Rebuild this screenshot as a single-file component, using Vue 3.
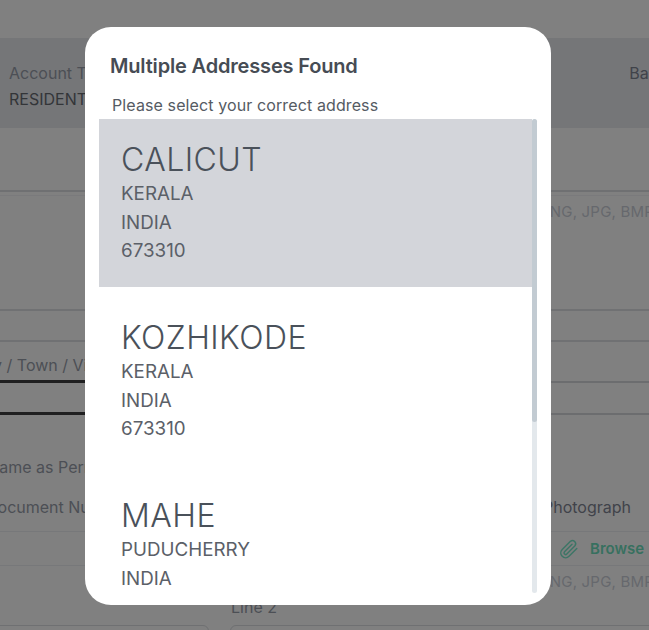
<template>
  <div class="page">
    <div class="bg">
      <div class="band">
        <div>
          <div class="label">Account Type</div>
          <div class="value">RESIDENTIAL</div>
        </div>
        <div class="label dark">Bank</div>
      </div>
      <div class="row r1"></div>
      <div class="row r2"><span class="hint">PNG, JPG, BMP</span></div>
      <div class="row r3"></div>
      <div class="row r4">
        <div class="cell focus"><span class="label city">City / Town / Village</span></div>
        <div class="cell"></div>
      </div>
      <div class="row r5">
        <div class="cell focus"></div>
        <div class="cell"></div>
      </div>
      <div class="row r6">
        <span class="label same">Same as Permanent</span>
      </div>
      <div class="row r7">
        <span class="label doc">Document Number</span>
        <span class="label dark photo">Photograph</span>
      </div>
      <div class="row r8">
        <svg class="clip" viewBox="0 0 24 24" width="22" height="22" fill="none" stroke="#3d7566" stroke-width="1.6" stroke-linecap="round" stroke-linejoin="round">
          <path d="M20.5 11.5 12 20a5.2 5.2 0 0 1-7.4-7.4l9-9a3.5 3.5 0 0 1 4.9 4.9l-8.9 9a1.7 1.7 0 0 1-2.5-2.5l8.2-8.2" />
        </svg>
        <span class="browse">Browse</span>
      </div>
      <div class="row r9"><span class="hint">PNG, JPG, BMP</span></div>
      <div class="row r10">
        <span class="label line2">Line 2</span>
      </div>
      <div class="inputs">
        <div class="input left"></div>
        <div class="input right"></div>
      </div>
    </div>

    <div class="overlay">
      <div class="modal">
        <h2 class="title">Multiple Addresses Found</h2>
        <p class="sub">Please select your correct address</p>
        <div class="list-wrap">
          <div class="list">
            <div
              v-for="(a, i) in addresses"
              :key="a.city"
              class="item"
              :class="{ selected: i === 0 }"
            >
              <div class="city-name">{{ a.city }}</div>
              <div class="line">{{ a.state }}</div>
              <div class="line">INDIA</div>
              <div class="line">{{ a.pin }}</div>
            </div>
          </div>
          <div class="track"><div class="thumb"></div></div>
        </div>
      </div>
    </div>
  </div>
</template>

<script setup>
const addresses = [
  { city: 'CALICUT', state: 'KERALA', pin: '673310' },
  { city: 'KOZHIKODE', state: 'KERALA', pin: '673310' },
  { city: 'MAHE', state: 'PUDUCHERRY', pin: '673310' }
]
</script>

<style>
html, body {
  margin: 0;
  background: #808080;
}
</style>

<style scoped>
.page {
  position: relative;
  width: 649px;
  height: 630px;
  overflow: hidden;
  background: #808080;
  font-family: Inter, "Liberation Sans", sans-serif;
}

.bg {
  padding-top: 38px;
  display: flex;
  flex-direction: column;
}

.band {
  height: 90px;
  box-sizing: border-box;
  padding: 25px 0 0 9px;
  background: #757678;
  display: flex;
  justify-content: space-between;
  white-space: nowrap;
  overflow: hidden;
}

.label {
  font-size: 16px;
  line-height: 20px;
  color: #4c4f55;
  white-space: nowrap;
}

.label.dark {
  color: #40434a;
}

.band .label.dark {
  margin-right: -18px;
}

.value {
  font-size: 16px;
  line-height: 20px;
  margin-top: 6px;
  color: #333538;
}

.row {
  box-sizing: border-box;
  display: flex;
  flex: none;
  align-items: center;
  white-space: nowrap;
}

.r1 {
  height: 64px;
  border-bottom: 2px solid #6f7072;
}

.r2 {
  height: 116px;
  margin-top: 3px;
  align-items: flex-start;
  padding: 7px 0 0 540px;
  border-top: 1px solid #7a7a7c;
  border-bottom: 2px solid #707173;
}

.hint {
  font-size: 15px;
  line-height: 17px;
  letter-spacing: 0.2px;
  color: #66686d;
}

.r3 {
  height: 31px;
  border-bottom: 2px solid #707173;
}

.r4,
.r5 {
  align-items: stretch;
}

.r4 {
  height: 41px;
}

.r5 {
  height: 32px;
}

.cell {
  flex: 1;
  box-sizing: border-box;
  border-bottom: 2px solid #6c6d6f;
}

.cell.focus {
  flex: none;
  width: 210px;
  display: flex;
  align-items: center;
  padding-top: 7px;
  border-bottom: 3px solid #1f1f20;
}

.city {
  margin-left: -28px;
}

.r6 {
  height: 65px;
  padding-top: 39px;
}

.same {
  margin-left: -11px;
}

.r7 {
  height: 52px;
  padding-top: 2px;
  border-bottom: 1px solid #77787a;
  justify-content: space-between;
}

.doc {
  margin-left: -14px;
}

.photo {
  margin-right: 18px;
}

.r8 {
  height: 34px;
  padding-left: 558px;
  gap: 10px;
  border-bottom: 1px solid #77787a;
}

.clip {
  flex: none;
}

.browse {
  font-size: 15px;
  font-weight: 600;
  color: #37705f;
}

.r9 {
  height: 30px;
  align-items: flex-start;
  padding: 7px 0 0 540px;
}

.r10 {
  height: 29px;
  align-items: flex-start;
  padding: 1px 0 0 231px;
}

.inputs {
  display: flex;
  gap: 21px;
  margin-left: -20px;
  height: 30px;
}

.input {
  flex: none;
  width: 229px;
  box-sizing: border-box;
  border: 1px solid #6f7072;
  border-radius: 6px;
}

.input.right {
  width: 460px;
}

.overlay {
  position: absolute;
  inset: 0;
  padding: 27px 98px 25px 85px;
  box-sizing: border-box;
}

.modal {
  height: 100%;
  box-sizing: border-box;
  background: #fff;
  border-radius: 26px;
  padding: 26px 14px 12px;
  display: flex;
  flex-direction: column;
}

.title {
  margin: 0 0 0 11px;
  font-size: 20px;
  line-height: 26px;
  font-weight: 600;
  letter-spacing: -0.17px;
  color: #464c54;
}

.sub {
  margin: 18px 0 0 13px;
  font-size: 16px;
  line-height: 16px;
  letter-spacing: 0.11px;
  color: #555b63;
}

.list-wrap {
  flex: 1;
  min-height: 0;
  margin-top: 6px;
  display: flex;
}

.list {
  flex: 1;
  min-width: 0;
  overflow: hidden;
}

.item {
  height: 168px;
  margin-bottom: 10px;
  box-sizing: border-box;
  padding: 21px 22px 0;
}

.item.selected {
  background: #d3d5da;
}

.city-name {
  font-size: 32px;
  line-height: 40px;
  font-weight: 300;
  letter-spacing: 0.45px;
  color: #4a515a;
}

.line {
  font-size: 18.8px;
  line-height: 28.5px;
  color: #5b6068;
}

.track {
  flex: none;
  width: 5px;
  background: #e3e8ec;
  border-radius: 3px;
}

.thumb {
  height: 303px;
  background: #c2cbd2;
  border-radius: 3px;
}
</style>
